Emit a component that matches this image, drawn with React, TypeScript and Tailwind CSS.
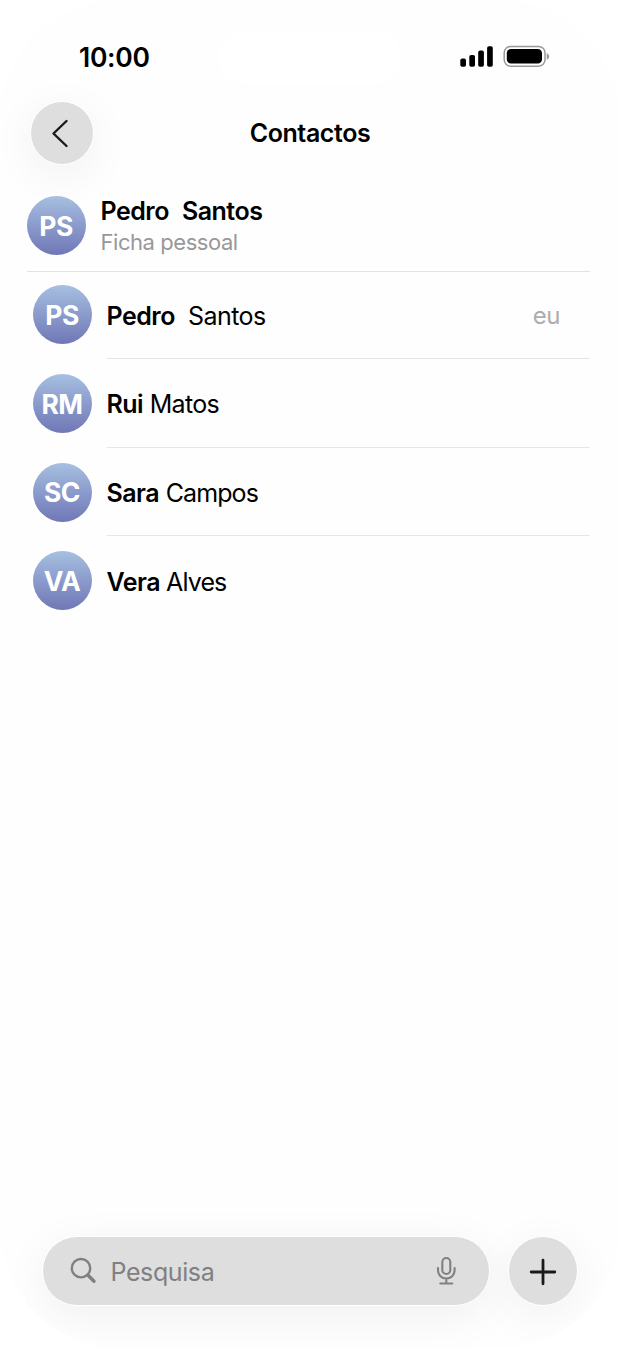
interface Contact {
    id: number;
    initials: string;
    firstName: string;
    lastName: string;
    isMe?: boolean;
    lastClass: string;
}

const contacts: Contact[] = [
    { id: 1, initials: "PS", firstName: "Pedro", lastName: "Santos", isMe: true, lastClass: "ml-[13px] tracking-[-0.55px]" },
    { id: 2, initials: "RM", firstName: "Rui", lastName: "Matos", lastClass: "ml-[6.5px] tracking-[-0.7px]" },
    { id: 3, initials: "SC", firstName: "Sara", lastName: "Campos", lastClass: "ml-[6.5px] tracking-[-0.9px]" },
    { id: 4, initials: "VA", firstName: "Vera", lastName: "Alves", lastClass: "ml-[6px] tracking-[-0.9px]" },
];

const Avatar = ({ initials }: { initials: string }) => (
    <div className="flex size-[59px] shrink-0 items-center justify-center rounded-full bg-linear-to-b from-[#a7c0e1] to-[#7077b6] pt-px text-[26.5px] leading-none font-bold tracking-[-0.6px] text-white">
        {initials}
    </div>
);

const StatusBar = () => (
    <div className="flex h-[101px] shrink-0 items-start pt-[30px] pl-[79px]">
        <span className="mt-[11px] w-[140px] text-[26.5px] leading-8 font-semibold tracking-[-0.3px]">10:00</span>
        <div className="h-[54px] w-[182px] rounded-full bg-white" />
        {/* signal and battery */}
        <svg className="mt-[13px] ml-[59px]" width="92" height="28" viewBox="460 43 92 28">
            <rect x="460.3" y="58.6" width="5.7" height="8.1" rx="1.8" />
            <rect x="469.3" y="55" width="5.7" height="11.7" rx="1.8" />
            <rect x="478.2" y="50.6" width="5.7" height="16.1" rx="1.8" />
            <rect x="487.1" y="46.2" width="5.7" height="20.5" rx="1.8" />
            <rect x="504.2" y="46.4" width="40.8" height="19.8" rx="6.4" fill="none" stroke="#999" strokeWidth="1.5" />
            <rect x="506.8" y="49" width="35.2" height="14.6" rx="4.2" />
            <path d="M546.7 53.2c1.6.5 2.4 1.7 2.4 3.2s-.8 2.7-2.4 3.2z" fill="#999" />
        </svg>
    </div>
);

const Header = () => (
    <div className="grid h-[64px] shrink-0 grid-cols-[64px_1fr_64px] items-center px-[30px]">
        <button className="flex size-[64px] items-center justify-center rounded-full border border-white bg-[#dedede] shadow-[0_10px_46px_rgba(0,0,0,0.06)]">
            <svg className="-ml-[5px]" width="20" height="30" viewBox="0 0 20 30" fill="none" stroke="#1a1a1a" strokeWidth="2.4" strokeLinecap="round" strokeLinejoin="round">
                <path d="M16.5 3 3.5 15.5 16.5 28" />
            </svg>
        </button>
        <h1 className="text-center text-[25px] leading-8 font-semibold tracking-[-0.4px]">Contactos</h1>
    </div>
);

const ContactRow = ({ contact, last }: { contact: Contact; last: boolean }) => (
    <div className="flex h-[88.67px] items-center gap-[15px]">
        <Avatar initials={contact.initials} />
        <div className={`flex h-full flex-1 items-center border-b-[1.5px] pt-[4px] text-[25px] ${last ? "border-transparent" : "border-[#e6e6e6]"}`}>
            <span className="font-semibold tracking-[-0.5px]">{contact.firstName}</span>
            <span className={contact.lastClass}>{contact.lastName}</span>
            {contact.isMe && <span className="mr-[30px] ml-auto text-[24px] tracking-[-0.5px] text-[#adadad]">eu</span>}
        </div>
    </div>
);

const SearchBar = () => (
    <div className="mt-auto mb-[42px] flex shrink-0 gap-[18px] pr-[42px] pl-[41.5px]">
        <div className="flex h-[70px] flex-1 items-center rounded-full border border-white bg-[#dedede] pr-[32px] pl-[27px] text-[#808082] shadow-[0_10px_46px_rgba(0,0,0,0.06)]">
            <svg width="28" height="28" viewBox="0 0 28 28" fill="none" stroke="currentColor" strokeLinecap="round">
                <circle cx="11" cy="11.2" r="9.2" strokeWidth="2.4" />
                <path d="m18 18.2 6 6" strokeWidth="3.4" />
            </svg>
            <span className="mt-[3px] ml-[13px] flex-1 text-[25px] tracking-[-0.4px]">Pesquisa</span>
            <svg width="22" height="30" viewBox="0 0 22 30" fill="none" stroke="currentColor" strokeWidth="2.1" strokeLinecap="round">
                <rect x="7.3" y="2" width="8" height="16" rx="4" />
                <path d="M3 12v2.500a8.300 8 0 0 0 16.600 0V12M11.300 22.500v5M5.300 27.500h12" />
            </svg>
        </div>
        <button className="flex size-[70px] items-center justify-center rounded-full border border-white bg-[#dedede] shadow-[0_10px_46px_rgba(0,0,0,0.06)]">
            <svg className="mt-px" width="28" height="28" viewBox="0 0 28 28" stroke="#1a1a1a" strokeWidth="2.8" strokeLinecap="round">
                <path d="M14 2.2v23.6M2.2 14h23.6" />
            </svg>
        </button>
    </div>
);

const App = () => {
    return (
        <div className="h-[1348px] w-[620px] bg-white font-['Inter','Liberation_Sans',sans-serif] text-black">
            <div className="flex h-full flex-col overflow-hidden rounded-[120px] bg-[#fefefe]">
                <StatusBar />
                <Header />

                {/* personal card */}
                <div className="mr-[30px] ml-[26.5px] flex h-[107px] shrink-0 items-start gap-[15px] border-b-[1.5px] border-[#e2e2e2] pt-[31px]">
                    <Avatar initials="PS" />
                    <div className="flex flex-col">
                        <div className="text-[25px] leading-[30px] font-semibold tracking-[-0.5px]">
                            <span>Pedro</span>
                            <span className="ml-[13px]">Santos</span>
                        </div>
                        <span className="mt-px text-[22px] leading-[30px] tracking-[-0.45px] text-[#98989b]">Ficha pessoal</span>
                    </div>
                </div>

                <div className="-mt-[1.5px] mr-[30px] ml-[32.5px] shrink-0">
                    {contacts.map((contact, index) => (
                        <ContactRow key={contact.id} contact={contact} last={index === contacts.length - 1} />
                    ))}
                </div>

                <SearchBar />
            </div>
        </div>
    );
};

export default App;
